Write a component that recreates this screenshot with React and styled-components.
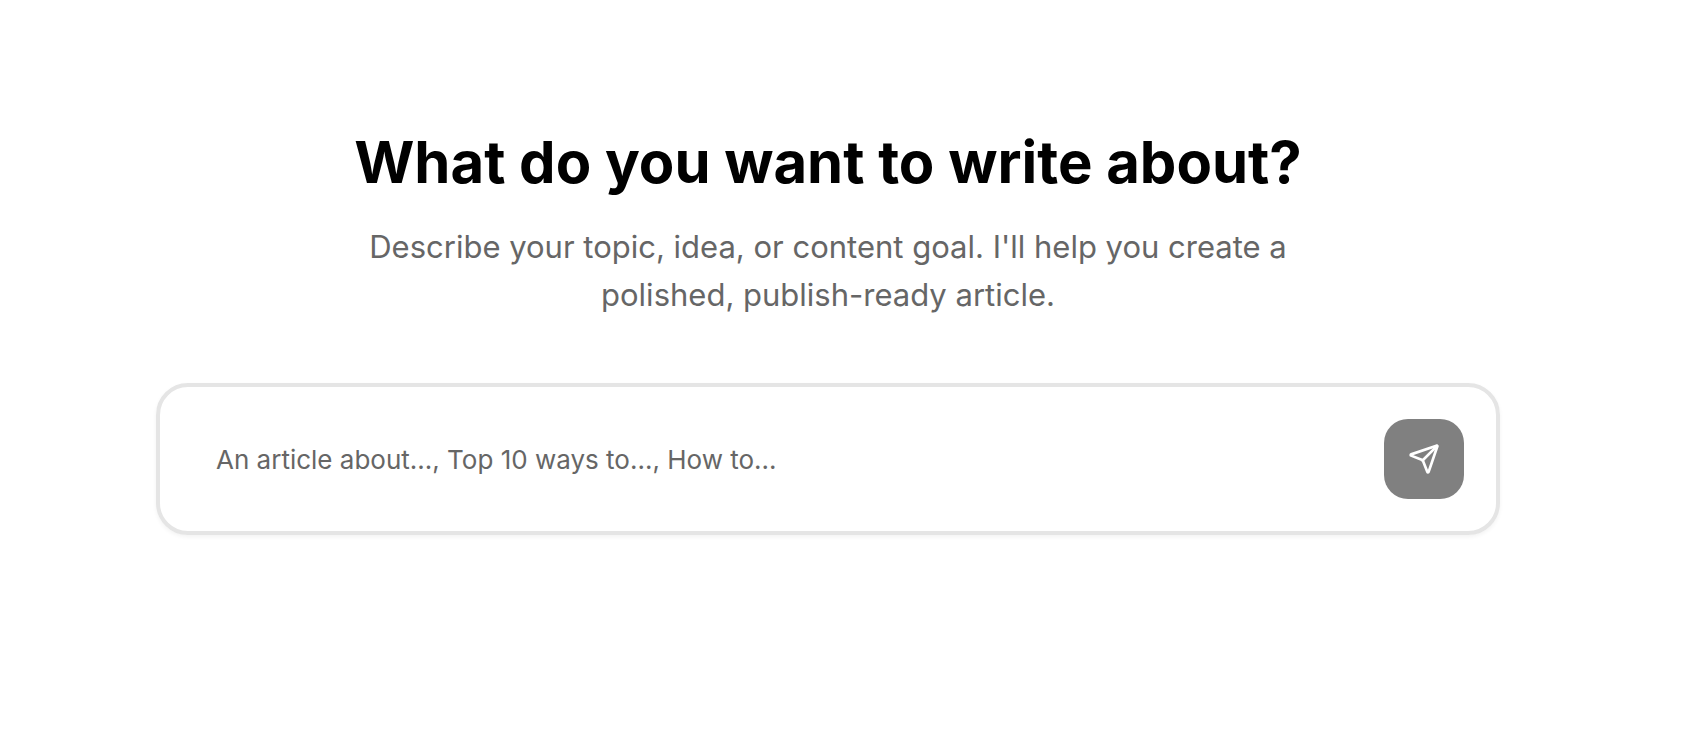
import React from "react";
import styled, { createGlobalStyle } from "styled-components";

const GlobalStyle = createGlobalStyle`
  * { box-sizing: border-box; }
  body {
    margin: 0;
    background: #fff;
    font-family: Inter, "Liberation Sans", sans-serif;
  }
`;

const Page = styled.main`
  display: flex;
  flex-direction: column;
  align-items: center;
  padding: 127px 38px 128px 0;
`;

const Title = styled.h1`
  margin: 0;
  font-size: 58px;
  line-height: 70px;
  font-weight: 700;
  color: #000;
  text-align: center;
`;

const Subtitle = styled.p`
  margin: 26px 0 0;
  max-width: 960px;
  font-size: 31px;
  line-height: 48px;
  color: #666;
  text-align: center;
`;

const Composer = styled.form`
  display: flex;
  align-items: center;
  width: 100%;
  max-width: 1344px;
  margin-top: 64px;
  padding: 32px;
  border: 4px solid #e5e5e5;
  border-radius: 32px;
  box-shadow: 0 2px 4px rgba(0, 0, 0, 0.05);
`;

const Prompt = styled.input`
  flex: 1;
  min-width: 0;
  height: 80px;
  padding: 0 24px;
  border: 0;
  outline: 0;
  background: transparent;
  font-family: inherit;
  font-size: 26px;
  color: #000;
  &::placeholder { color: #666; opacity: 1; }
`;

const SendButton = styled.button`
  display: grid;
  place-items: center;
  width: 80px;
  height: 80px;
  padding: 0;
  border: 0;
  border-radius: 24px;
  background: #808080;
  color: #fff;
`;

export default function App() {
  return (
    <>
      <GlobalStyle />
      <Page>
        <Title>What do you want to write about?</Title>
        <Subtitle>Describe your topic, idea, or content goal. I'll help you create a polished, publish-ready article.</Subtitle>
        <Composer onSubmit={(e) => e.preventDefault()}>
          <Prompt aria-label="Article topic" placeholder="An article about..., Top 10 ways to..., How to..." />
          <SendButton type="submit" aria-label="Send">
            <svg width="32" height="32" viewBox="0 0 24 24" fill="none" stroke="currentColor" strokeWidth="2" strokeLinecap="round" strokeLinejoin="round">
              <path d="M14.536 21.686a.5.5 0 0 0 .937-.024l6.5-19a.496.496 0 0 0-.635-.635l-19 6.5a.5.5 0 0 0-.024.937l7.93 3.18a2 2 0 0 1 1.112 1.11z" />
              <path d="m21.854 2.147-10.94 10.939" />
            </svg>
          </SendButton>
        </Composer>
      </Page>
    </>
  );
}
